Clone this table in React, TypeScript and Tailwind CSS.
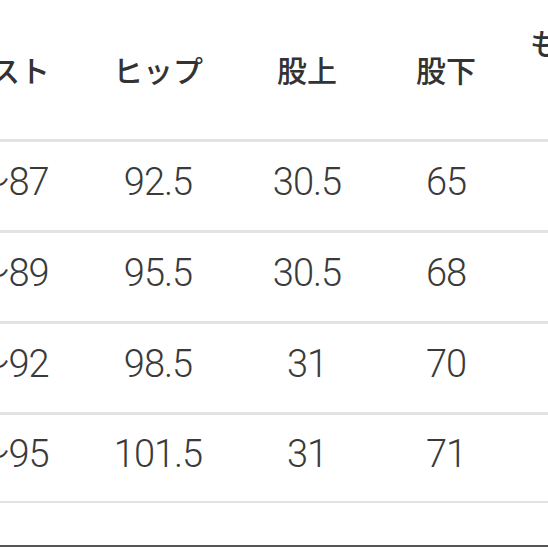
const headers = ["ウエスト", "ヒップ", "股上", "股下"];

const rows = [
  ["64〜87", "92.5", "30.5", "65"],
  ["66〜89", "95.5", "30.5", "68"],
  ["69〜92", "98.5", "31", "70"],
  ["72〜95", "101.5", "31", "71"],
];

// column widths in px, first column starts off-screen
const colW = ["w-[170px]", "w-[166px]", "w-[132px]", "w-[146px]", "w-[112px]"];

function Cell({ i, children }: { i: number; children?: React.ReactNode }) {
  return <div className={`${colW[i]} shrink-0 text-center`}>{children}</div>;
}

export default function App() {
  return (
    <div className="h-[548px] w-[548px] overflow-hidden bg-white">
      <div className="ml-[-95px] flex w-[726px] flex-col">
        <div className="flex h-[139px] items-center pb-[2px] text-[30px] font-medium leading-none text-[#333] [font-family:'Noto_Sans_CJK_JP',sans-serif]">
          {headers.map((h, i) => (
            <Cell key={h} i={i}>
              {h}
            </Cell>
          ))}
          <Cell i={4}>
            <div className="-mt-[14px] leading-[40px]">
              もも周
              <br />り
            </div>
          </Cell>
        </div>
        {rows.map((r, ri) => (
          <div
            key={ri}
            className={`flex h-[91px] items-center border-t-[3px] border-[#e3e3e3] pb-[8px] text-[38px] font-light leading-none tracking-[-1px] text-[#3a3a3a] [font-family:Roboto,'Noto_Sans_CJK_JP',sans-serif] ${
              ri === rows.length - 1 ? "border-b-2" : ""
            }`}
          >
            {r.map((v, i) => (
              <Cell key={i} i={i}>
                {v}
              </Cell>
            ))}
            <Cell i={4} />
          </div>
        ))}
        <div className="mt-[42px] h-[2px] bg-[#555]" />
      </div>
    </div>
  );
}
